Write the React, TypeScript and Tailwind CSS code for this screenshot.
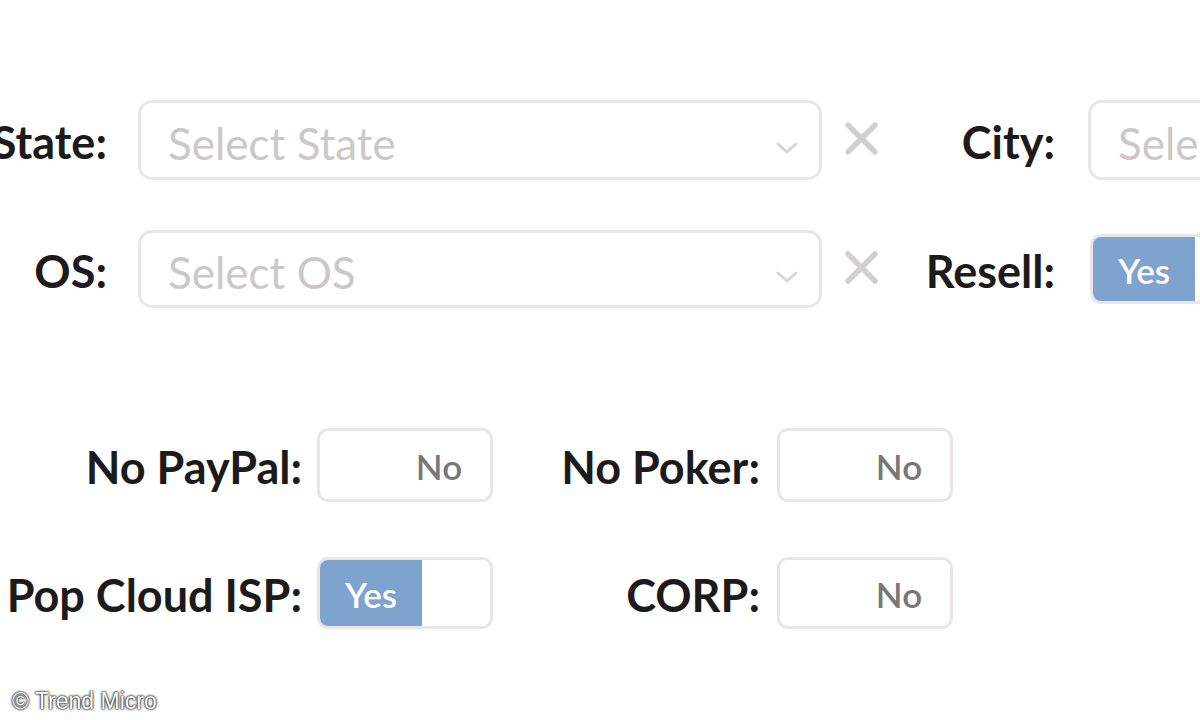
import React from "react";

const labelFont = { fontFamily: "Lato, 'Open Sans', sans-serif" };

function Chevron() {
  return (
    <svg width="24" height="14" viewBox="0 0 24 14" className="shrink-0">
      <path d="M3 3 L12 11 L21 3" fill="none" stroke="#d9d4d4" strokeWidth="3" strokeLinecap="round" strokeLinejoin="round" />
    </svg>
  );
}

function XIcon() {
  return (
    <svg width="37" height="33" viewBox="0 0 37 33" className="shrink-0">
      <path d="M5 3 L32 30 M32 3 L5 30" fill="none" stroke="#d4cfcf" strokeWidth="5.5" strokeLinecap="round" />
    </svg>
  );
}

function Select({ placeholder, w, h }: { placeholder: string; w: string; h: string }) {
  return (
    <div className={`${w} ${h} shrink-0 rounded-[14px] border-[3px] border-[#ebe6e6] bg-white flex items-center pl-[27px] pr-[20px] justify-between`}>
      <span className="text-[44px] text-[#cdc8c8] whitespace-nowrap leading-none pt-[5px]" style={labelFont}>{placeholder}</span>
      <div className="pt-[16px]"><Chevron /></div>
    </div>
  );
}

function Toggle({ on, h }: { on: boolean; h: string }) {
  return (
    <div className={`w-[176px] ${h} shrink-0 rounded-[11px] border-[3px] border-[#ebe6e6] bg-white flex overflow-hidden`}>
      {on ? (
        <>
          <div className="w-[102px] h-full bg-[#7ea3cf] flex items-center justify-center">
            <span className="text-[35px] font-semibold text-white leading-none pt-[3px]" style={labelFont}>Yes</span>
          </div>
          <div className="flex-1" />
        </>
      ) : (
        <>
          <div className="w-[68px] h-full" />
          <div className="flex-1 flex items-center justify-center">
            <span className="text-[35px] font-semibold text-[#7a7676] leading-none pt-[3px]" style={labelFont}>No</span>
          </div>
        </>
      )}
    </div>
  );
}

function Label({ text, w }: { text: string; w: string }) {
  return (
    <div className={`${w} shrink-0 flex justify-end pt-[5px]`}>
      <span className="text-[45px] font-bold text-[#1c1a1a] whitespace-nowrap leading-none" style={labelFont}>{text}</span>
    </div>
  );
}

export default function App() {
  return (
    <div className="w-[1200px] h-[720px] bg-white relative overflow-hidden">
      <div className="pt-[100px] flex flex-col gap-[50px]">
        <div className="flex items-center">
          <Label text="State:" w="w-[107px]" />
          <div className="ml-[31px]"><Select placeholder="Select State" w="w-[684px]" h="h-[80px]" /></div>
          <div className="ml-[21px] -mt-[4px]"><XIcon /></div>
          <Label text="City:" w="w-[175px]" />
          <div className="ml-[33px] flex">
            <div className="w-[200px] h-[80px] shrink-0 rounded-[14px] border-[3px] border-[#ebe6e6] bg-white flex items-center pl-[27px]">
              <span className="text-[44px] text-[#cdc8c8] whitespace-nowrap leading-none pt-[5px]" style={labelFont}>Select City</span>
            </div>
          </div>
        </div>
        <div className="flex items-center">
          <Label text="OS:" w="w-[107px]" />
          <div className="ml-[31px]"><Select placeholder="Select OS" w="w-[684px]" h="h-[78px]" /></div>
          <div className="ml-[21px] -mt-[4px]"><XIcon /></div>
          <Label text="Resell:" w="w-[175px]" />
          <div className="ml-[35px] flex">
            <div className="w-[220px] h-[70px] shrink-0 rounded-[11px] border-[3px] border-[#ebe6e6] bg-white flex overflow-hidden">
              <div className="w-[102px] h-full bg-[#7ea3cf] flex items-center justify-center">
                <span className="text-[35px] font-semibold text-white leading-none pt-[3px]" style={labelFont}>Yes</span>
              </div>
            </div>
          </div>
        </div>
      </div>

      <div className="mt-[120px] flex flex-col gap-[55px]">
        <div className="flex items-center">
          <Label text="No PayPal:" w="w-[302px]" />
          <div className="ml-[15px]"><Toggle on={false} h="h-[74px]" /></div>
          <Label text="No Poker:" w="w-[267px]" />
          <div className="ml-[17px]"><Toggle on={false} h="h-[74px]" /></div>
        </div>
        <div className="flex items-center">
          <Label text="Pop Cloud ISP:" w="w-[302px]" />
          <div className="ml-[15px]"><Toggle on={true} h="h-[72px]" /></div>
          <Label text="CORP:" w="w-[267px]" />
          <div className="ml-[17px]"><Toggle on={false} h="h-[72px]" /></div>
        </div>
      </div>

      <div
        className="absolute left-[12px] top-[684px] text-[23px] text-white whitespace-nowrap"
        style={{ fontFamily: "'Liberation Sans', Arial, sans-serif", textShadow: "0 0 3px #222, 0 0 2px #222, 0 0 1px #000" }}
      >
        © Trend Micro
      </div>
    </div>
  );
}
